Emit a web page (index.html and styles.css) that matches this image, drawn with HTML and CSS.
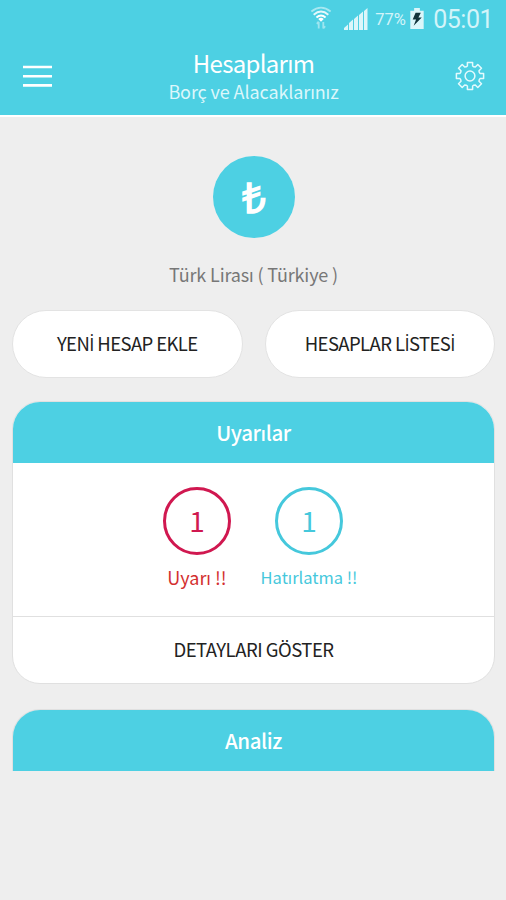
FILE: index.html
```html
<!DOCTYPE html>
<html lang="tr">
<head>
    <meta charset="UTF-8">
    <meta name="viewport" content="width=device-width, initial-scale=1.0">
    <title>Hesaplarım</title>
    <link rel="stylesheet" href="styles.css">
</head>
<body>
    <header class="header">
        <div class="status-bar">
            <svg class="wifi" width="22" height="25" viewBox="0 0 24 26" fill="none" stroke="#fff" stroke-width="2">
                <path d="M1.500 6.500Q12 -2 22.500 6.500" opacity=".5"/>
                <path d="M4 10Q12 3 20 10" opacity=".85"/>
                <path d="M7 13Q12 8.500 17 13"/>
                <path d="M9 14.500Q12 12 15 14.500L12 17.500Z" fill="#fff" stroke="none"/>
                <path d="M9.500 25v-7M14.500 18v7M7.500 20l2-2.500M16.500 22.500l-2 2.500" opacity=".45"/>
            </svg>
            <svg class="signal" width="24" height="22" viewBox="0 0 24 22" fill="#fff">
                <path d="M0 22v-2l4-3.500V22zM5 22v-7l4-3.500V22zM10 22V11l4-3.500V22zM15 22V7l4-3.500V22zM20 22V3l3.500-3V22z" opacity=".8"/>
            </svg>
            <span class="percent">77%</span>
            <svg class="battery" width="14" height="21" viewBox="0 0 14 22">
                <path d="M4 0h6v3h4v19H0V3h4z" fill="#fff" opacity=".8"/>
                <path d="M5.500 5H11L8.500 10H12L3.500 18.500L6 12H2.500z" fill="#12343b"/>
            </svg>
            <span class="clock">05:01</span>
        </div>
        <div class="nav-bar">
            <button class="icon-button" aria-label="Menü">
                <svg width="29" height="24" viewBox="0 0 29 24" stroke="#fff" stroke-width="2.600">
                    <path d="M0 3h29M0 12.200h29M0 21.400h29"/>
                </svg>
            </button>
            <div class="titles">
                <h1>Hesaplarım</h1>
                <p>Borç ve Alacaklarınız</p>
            </div>
            <button class="icon-button" aria-label="Ayarlar">
                <svg width="30" height="30" viewBox="-15 -15 30 30" fill="none" stroke="#e4fafd" stroke-width="1.500" stroke-linejoin="round">
                    <circle r="4.900"/>
                    <path d="M-3.800 -9.200L-2.600 -10V-13.600H2.600V-10L3.800 -9.200L5.300 -9L7.800 -11.500L11.500 -7.800L9 -5.300L9.200 -3.800L10 -2.600H13.600V2.600H10L9.200 3.800L9 5.300L11.500 7.800L7.800 11.500L5.300 9L3.800 9.200L2.600 10V13.600H-2.600V10L-3.800 9.200L-5.300 9L-7.800 11.500L-11.500 7.800L-9 5.300L-9.200 3.800L-10 2.600H-13.600V-2.600H-10L-9.200 -3.800L-9 -5.300L-11.500 -7.800L-7.800 -11.500L-5.300 -9Z"/>
                </svg>
            </button>
        </div>
    </header>

    <main class="content">
        <div class="currency">
            <div class="currency-icon">₺</div>
            <p>Türk Lirası ( Türkiye )</p>
        </div>

        <div class="buttons">
            <button class="pill"><span>YEN<span class="dotted">İ</span> HESAP EKLE</span></button>
            <button class="pill"><span>HESAPLAR L<span class="dotted">İ</span>STES<span class="dotted">İ</span></span></button>
        </div>

        <section class="card">
            <h2>Uyarılar</h2>
            <div class="counts">
                <div class="count warning">
                    <div class="circle">1</div>
                    <p>Uyarı !!</p>
                </div>
                <div class="count reminder">
                    <div class="circle">1</div>
                    <p>Hatırlatma !!</p>
                </div>
            </div>
            <button class="details">DETAYLARI GÖSTER</button>
        </section>

        <section class="card analysis">
            <h2>Analiz</h2>
        </section>
    </main>
</body>
</html>
```
FILE: styles.css
```css
* {
    box-sizing: border-box;
}
body {
    margin: 0;
    background: #eeeeee;
    font-family: "Noto Sans CJK SC", "Noto Sans", sans-serif;
    color: #222;
}
h1, h2, p {
    margin: 0;
    font-weight: 400;
}
button {
    border: none;
    padding: 0;
    background: none;
    font-family: inherit;
    color: inherit;
    cursor: pointer;
}

/* Header */
.header {
    height: 117px;
    background: #4dd0e3;
    border-bottom: 2px solid #fff;
    color: #fff;
}
.status-bar {
    display: flex;
    justify-content: flex-end;
    align-items: center;
    height: 38px;
    padding-right: 13px;
    font-family: Roboto, sans-serif;
    color: #d3f4f9;
}
.wifi {
    margin: 0 12px 3px 0;
}
.signal {
    margin-right: 7px;
    margin-bottom: 1px;
}
.percent {
    width: 32px;
    font-size: 16.5px;
}
.battery {
    margin: 0 9px 1px 3px;
}
.clock {
    padding-top: 2px;
    font-size: 25px;
    line-height: 36px;
    letter-spacing: -0.5px;
}
.nav-bar {
    display: flex;
    justify-content: space-between;
    align-items: center;
    height: 75px;
    padding: 0 21px 0 23px;
}
.icon-button svg {
    display: block;
}
.titles {
    text-align: center;
}
.titles h1 {
    font-size: 24px;
    line-height: 30px;
    letter-spacing: -0.7px;
}
.titles p {
    font-size: 18px;
    line-height: 26px;
    letter-spacing: -0.1px;
    color: #dcf7fb;
}

/* Content */
.content {
    padding: 39px 11px 0 12px;
}
.currency {
    display: flex;
    flex-direction: column;
    align-items: center;
}
.currency-icon {
    width: 82px;
    height: 82px;
    border-radius: 50%;
    background: #4dd0e3;
    color: #fff;
    font: 800 42px/82px "Open Sans", sans-serif;
    text-align: center;
}
.currency p {
    margin-top: 21px;
    font-size: 18px;
    line-height: 30px;
    letter-spacing: -0.15px;
    color: #777;
}
.buttons {
    display: flex;
    gap: 22px;
    margin-top: 21px;
}
.pill {
    flex: 1;
    height: 68px;
    padding-bottom: 3px;
    border: 1px solid #e3e3e3;
    border-radius: 34px;
    background: #fff;
    font-size: 18.5px;
    letter-spacing: -0.6px;
}
.dotted {
    font-family: "Open Sans", sans-serif;
    line-height: 1;
}
.card {
    margin-top: 23px;
    border: 1px solid #e0e0e0;
    border-radius: 28px;
    background: #fff;
    overflow: hidden;
}
.card h2 {
    background: #4dd0e3;
    color: #fff;
    font-size: 20.5px;
    font-weight: 500;
    line-height: 61px;
    letter-spacing: -0.4px;
    text-align: center;
}
.counts {
    display: flex;
    justify-content: center;
    height: 153px;
    padding: 24px 1px 0 0;
}
.count {
    display: flex;
    flex-direction: column;
    align-items: center;
    width: 112px;
}
.circle {
    width: 68px;
    height: 68px;
    border: 3px solid;
    border-radius: 50%;
    font-size: 28px;
    line-height: 61px;
    text-align: center;
}
.count p {
    margin-top: 9px;
    font-size: 18px;
    line-height: 26px;
    white-space: nowrap;
}
.warning {
    color: #d01850;
}
.warning p {
    color: #d32f2f;
}
.reminder {
    color: #45c8dc;
}
.reminder p {
    font-size: 16.5px;
}
.details {
    display: block;
    width: 100%;
    height: 67px;
    padding-bottom: 3px;
    border-top: 1px solid #e0e0e0;
    font-size: 18.5px;
    letter-spacing: -0.5px;
}
.analysis {
    margin-top: 25px;
    border-bottom: none;
    border-radius: 28px 28px 0 0;
}
```
